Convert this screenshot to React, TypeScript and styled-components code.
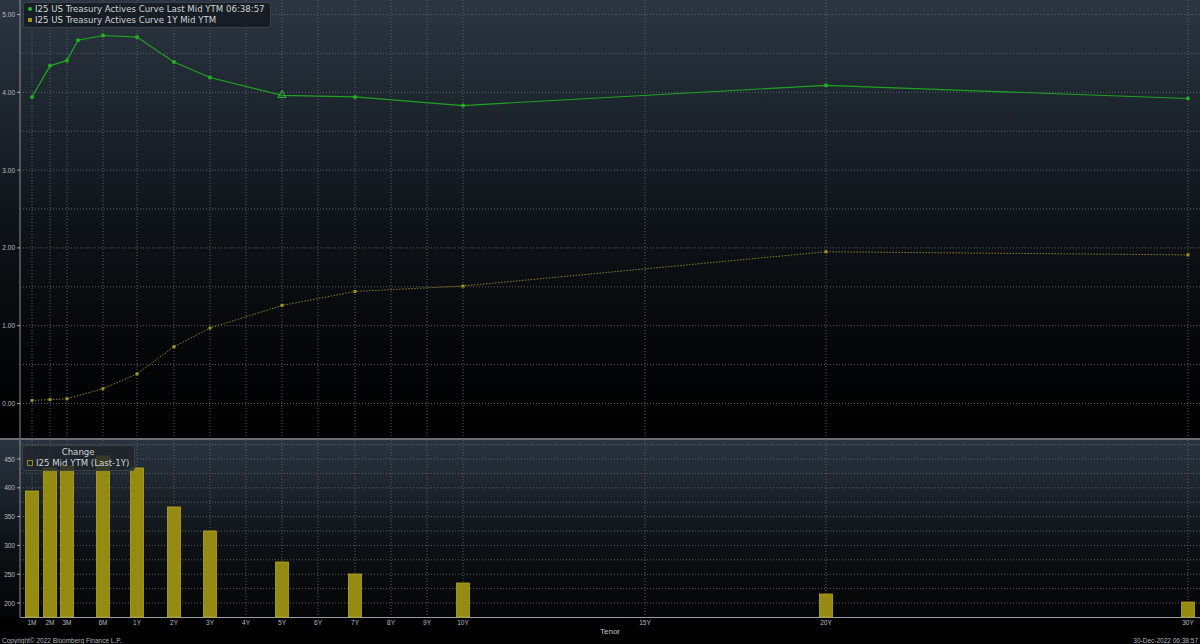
import React from 'react';
import styled, { createGlobalStyle } from 'styled-components';

const Global = createGlobalStyle`
  html, body { margin: 0; padding: 0; background: #000; }
  body { font-family: "Liberation Sans", Arial, sans-serif; }
`;

const Page = styled.div`
  width: 1200px;
  height: 644px;
  display: flex;
  flex-direction: column;
  background: #000;
  overflow: hidden;
`;

const Panel = styled.div<{ h: number }>`
  position: relative;
  height: ${({ h }) => h}px;
  flex: none;
`;

const Divider = styled.div`
  height: 2px;
  background: #6a6e72;
  flex: none;
`;

const Legend = styled.div`
  position: absolute;
  left: 23px;
  top: 2px;
  padding: 1px 5px 2px 4px;
  background: rgba(20, 26, 32, 0.85);
  border: 1px solid #3a4148;
  border-radius: 3px;
  color: #d0d4d8;
  font-family: "DejaVu Sans", sans-serif;
  font-size: 8.6px;
  line-height: 10.5px;
`;

const LegendRow = styled.div`
  display: flex;
  align-items: center;
  gap: 3px;
`;

const Swatch = styled.span<{ c: string; square?: boolean }>`
  width: 4px;
  height: 4px;
  border-radius: ${({ square }) => (square ? '0' : '50%')};
  background: ${({ c }) => c};
`;

const ChangeBox = styled(Legend)`
  top: 5px;
  left: 22px;
  text-align: center;
  background: rgba(30, 36, 42, 0.8);
`;

const Footer = styled.div`
  height: 8px;
  display: flex;
  justify-content: space-between;
  align-items: center;
  padding: 0 2px;
  color: #b0b4b8;
  font-size: 6.5px;
  flex: none;
`;

const tenors: [string, number][] = [
  ['1M', 32], ['2M', 50], ['3M', 67], ['6M', 103], ['1Y', 137], ['2Y', 174], ['3Y', 210],
  ['4Y', 246], ['5Y', 282], ['6Y', 318], ['7Y', 355], ['8Y', 391], ['9Y', 427], ['10Y', 463],
  ['15Y', 645], ['20Y', 826], ['30Y', 1188],
];

const y0 = 403.5;
const k = 77.8;
const yv = (v: number) => y0 - v * k;

const last: [number, number][] = [
  [32, 3.94], [50, 4.34], [67, 4.41], [78, 4.67], [103, 4.73], [137, 4.71], [174, 4.39],
  [210, 4.19], [282, 3.96], [355, 3.94], [463, 3.83], [826, 4.09], [1188, 3.92],
];
const prev: [number, number][] = [
  [32, 0.04], [50, 0.05], [67, 0.06], [103, 0.19], [137, 0.38], [174, 0.73], [210, 0.97],
  [282, 1.26], [355, 1.44], [463, 1.51], [826, 1.95], [1188, 1.91],
];
const bars: [number, number][] = [
  [32, 491], [50, 468], [67, 466], [103, 456], [137, 468], [174, 507], [210, 531],
  [282, 562], [355, 574], [463, 583], [826, 594], [1188, 602],
];

const TopChart = () => (
  <svg width="1200" height="438" style={{ display: 'block' }}>
    <defs>
      <linearGradient id="bg" x1="0" y1="0" x2="0" y2="1">
        <stop offset="0" stopColor="#2b3642" />
        <stop offset="0.5" stopColor="#0f1419" />
        <stop offset="0.85" stopColor="#030405" />
        <stop offset="1" stopColor="#000" />
      </linearGradient>
    </defs>
    <rect width="1200" height="438" fill="url(#bg)" />
    {tenors.map(([, x]) => (
      <line key={x} x1={x} x2={x} y1={0} y2={438} stroke="#5a6066" strokeDasharray="1 2" />
    ))}
    {Array.from({ length: 11 }, (_, i) => i * 0.5).map(v => (
      <line key={v} x1={20} x2={1200} y1={yv(v)} y2={yv(v)} stroke="#5a6066" strokeDasharray="1 2" />
    ))}
    <line x1={20} x2={20} y1={0} y2={438} stroke="#8a8f94" />
    {[0, 1, 2, 3, 4, 5].map(v => (
      <g key={v}>
        <line x1={17} x2={20} y1={yv(v)} y2={yv(v)} stroke="#aaa" />
        <text x={15} y={yv(v) + 2.5} fill="#b8bcc0" fontSize="6.5" textAnchor="end">{v.toFixed(2)}</text>
      </g>
    ))}
    <polyline points={prev.map(([x, v]) => `${x},${yv(v)}`).join(' ')} fill="none" stroke="#8a8018" strokeDasharray="1.5 1.5" />
    {prev.map(([x, v]) => (
      <rect key={x} x={x - 1.5} y={yv(v) - 1.5} width={3} height={3} fill="#a09520" />
    ))}
    <polyline points={last.map(([x, v]) => `${x},${yv(v)}`).join(' ')} fill="none" stroke="#1fa31f" strokeWidth="1.2" />
    {last.map(([x, v]) =>
      x === 282 ? (
        <polygon key={x} points={`${x},${yv(v) - 5} ${x - 4},${yv(v) + 2} ${x + 4},${yv(v) + 2}`} fill="none" stroke="#2fc02f" />
      ) : (
        <circle key={x} cx={x} cy={yv(v)} r={2} fill="#22b022" />
      )
    )}
  </svg>
);

const by = (v: number) => 603 - 440 - ((v - 200) / 50) * 28.8;

const BottomChart = () => (
  <svg width="1200" height="196" style={{ display: 'block' }}>
    <defs>
      <linearGradient id="bg2" x1="0" y1="0" x2="0" y2="1">
        <stop offset="0" stopColor="#2a3440" />
        <stop offset="0.6" stopColor="#0d1115" />
        <stop offset="1" stopColor="#040506" />
      </linearGradient>
    </defs>
    <rect width="1200" height="177" fill="url(#bg2)" />
    {tenors.map(([, x]) => (
      <line key={x} x1={x} x2={x} y1={0} y2={177} stroke="#5a6066" strokeDasharray="1 2" />
    ))}
    {Array.from({ length: 12 }, (_, i) => 200 + i * 25).map(v => (
      <line key={v} x1={20} x2={1200} y1={by(v)} y2={by(v)} stroke="#5a6066" strokeDasharray="1 2" />
    ))}
    <line x1={20} x2={20} y1={0} y2={177} stroke="#8a8f94" />
    <line x1={20} x2={1200} y1={177.5} y2={177.5} stroke="#9a9ea2" />
    {[200, 250, 300, 350, 400, 450].map(v => (
      <g key={v}>
        <line x1={17} x2={20} y1={by(v)} y2={by(v)} stroke="#aaa" />
        <text x={15} y={by(v) + 2.5} fill="#b8bcc0" fontSize="6.5" textAnchor="end">{v}</text>
      </g>
    ))}
    {bars.map(([x, top]) => (
      <rect key={x} x={x - 6.5} y={top - 440} width={13} height={617 - top} fill="#958a12" stroke="#b5a81c" strokeWidth="0.8" />
    ))}
    {tenors.map(([t, x]) => (
      <text key={t} x={x} y={185} fill="#b8bcc0" fontSize="6.5" textAnchor="middle">{t}</text>
    ))}
    <text x={610} y={194} fill="#c0c4c8" fontSize="8" textAnchor="middle">Tenor</text>
  </svg>
);

export default function App() {
  return (
    <Page>
      <Global />
      <Panel h={438}>
        <TopChart />
        <Legend>
          <LegendRow><Swatch c="#22c022" />I25 US Treasury Actives Curve Last Mid YTM 06:38:57</LegendRow>
          <LegendRow><Swatch c="#a09520" square />I25 US Treasury Actives Curve 1Y Mid YTM</LegendRow>
        </Legend>
      </Panel>
      <Divider />
      <Panel h={196}>
        <BottomChart />
        <ChangeBox>
          <div>Change</div>
          <LegendRow><Swatch c="transparent" square style={{ border: '1px solid #958a12' }} />I25 Mid YTM (Last-1Y)</LegendRow>
        </ChangeBox>
      </Panel>
      <Footer>
        <span>Copyright© 2022 Bloomberg Finance L.P.</span>
        <span>30-Dec-2022 06:38:57</span>
      </Footer>
    </Page>
  );
}
